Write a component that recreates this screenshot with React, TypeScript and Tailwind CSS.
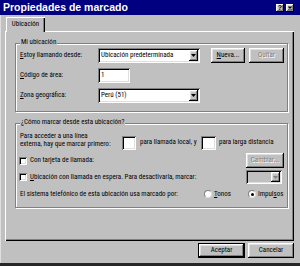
const raised =
  "shadow-[inset_-1px_-1px_#000,inset_1px_1px_#fff,inset_-2px_-2px_#808080,inset_2px_2px_#dfdfdf]";
const sunken =
  "shadow-[inset_1px_1px_#808080,inset_-1px_-1px_#fff,inset_2px_2px_#000,inset_-2px_-2px_#dfdfdf]";
const etched = "border border-[#808080] shadow-[inset_1px_1px_#fff,1px_1px_#fff]";
const disabledText = "text-[#808080] [text-shadow:1px_1px_0_#fff]";

function Arrow({ disabled }: { disabled?: boolean }) {
  return (
    <div className={`w-[9px] h-full flex items-center justify-center bg-[#c0c0c0] ${raised}`}>
      <svg width="5" height="3" viewBox="0 0 5 3">
        <polygon points="0,0 5,0 2.5,3" fill={disabled ? "#808080" : "#000"} />
      </svg>
    </div>
  );
}

function Combo({ text, width, disabled }: { text?: string; width: string; disabled?: boolean }) {
  return (
    <div className={`${width} h-full flex items-stretch p-[2px] ${disabled ? "bg-[#c0c0c0]" : "bg-white"} ${sunken}`}>
      <div className="flex-1 flex items-center pl-[1px] overflow-hidden whitespace-nowrap">{text}</div>
      <Arrow disabled={disabled} />
    </div>
  );
}

function Button({ children, width, disabled, isDefault }: { children: React.ReactNode; width: string; disabled?: boolean; isDefault?: boolean }) {
  return (
    <div className={`${width} h-full ${isDefault ? "border border-black" : ""} bg-[#c0c0c0]`}>
      <div className={`w-full h-full flex items-center justify-center ${raised} ${disabled ? disabledText : ""}`}>{children}</div>
    </div>
  );
}

function Check() {
  return <div className={`w-[8px] h-[8px] bg-white shrink-0 ${sunken}`} />;
}

function Radio({ checked }: { checked?: boolean }) {
  return (
    <div className="w-[8px] h-[8px] rounded-full bg-white shrink-0 border border-[#808080] border-r-[#dfdfdf] border-b-[#dfdfdf] flex items-center justify-center">
      {checked ? <div className="w-[3px] h-[3px] rounded-full bg-black" /> : null}
    </div>
  );
}

export default function App() {
  return (
    <div className="w-[300px] h-[266px] bg-[#c0c0c0] flex flex-col overflow-hidden text-black text-[7px] leading-none font-['Roboto_Condensed','Liberation_Sans',sans-serif]">
      {/* title bar */}
      <div className="h-[15px] bg-[#000080] flex items-center pl-[3px] pr-[6px] shrink-0">
        <span className="flex-1 text-white font-bold text-[10.5px] font-['Liberation_Sans',Arial,sans-serif]">
          Propiedades de marcado
        </span>
        <div className={`w-[8px] h-[8px] bg-[#c0c0c0] flex items-center justify-center ${raised}`}>
          <span className="text-[7px] font-bold leading-none font-['Liberation_Sans',sans-serif]">?</span>
        </div>
        <div className={`ml-[2px] w-[8px] h-[8px] bg-[#c0c0c0] flex items-center justify-center ${raised}`}>
          <svg width="4" height="4" viewBox="0 0 4 4">
            <path d="M0.5 0.5 L3.5 3.5 M3.5 0.5 L0.5 3.5" stroke="#000" strokeWidth="1.1" />
          </svg>
        </div>
      </div>

      {/* body */}
      <div className="flex-1 flex flex-col pl-[5px] pr-[6px] pt-[2px] shadow-[inset_1px_0_#dfdfdf]">
        {/* tabs */}
        <div className="flex h-[15px] -mb-[1px] relative z-10">
          <div className="ml-[1px] w-[39px] h-full bg-[#c0c0c0] shadow-[inset_1px_1px_#fff,inset_-1px_0_#000,inset_-2px_0_#808080] flex items-center justify-center">
            Ubicación
          </div>
        </div>

        {/* panel */}
        <div className="h-[210px] flex flex-col pl-[10px] pr-[6px] pt-[12px] shadow-[inset_1px_1px_#fff,inset_-1px_-1px_#000,inset_-2px_-2px_#808080]">
          {/* group 1 */}
          <div className={`relative h-[69px] ${etched} pl-[4px] pr-[3px] pt-[4px] flex flex-col gap-[5px]`}>
            <div className="absolute left-[4px] -top-[5px] px-[1px] bg-[#c0c0c0]">Mi ubicación</div>
            <div className="h-[15px] flex items-center">
              <span className="w-[78px]"><u>E</u>stoy llamando desde:</span>
              <Combo text="Ubicación predeterminada" width="w-[102px]" />
              <div className="ml-[11px] h-full">
                <Button width="w-[34px]"><u>N</u>ueva...</Button>
              </div>
              <div className="ml-[4px] h-full">
                <Button width="w-[35px]" disabled>Quitar</Button>
              </div>
            </div>
            <div className="h-[15px] flex items-center">
              <span className="w-[78px]"><u>C</u>ódigo de área:</span>
              <div className={`w-[32px] h-full bg-white flex items-center pl-[3px] ${sunken}`}>1</div>
            </div>
            <div className="h-[15px] flex items-center">
              <span className="w-[78px]"><u>Z</u>ona geográfica:</span>
              <Combo text="Perú (51)" width="w-[102px]" />
            </div>
          </div>

          {/* group 2 */}
          <div className={`relative mt-[11px] h-[85px] ${etched} pl-[4px] pr-[3px] pt-[9px] flex flex-col`}>
            <div className="absolute left-[4px] -top-[5px] px-[1px] bg-[#c0c0c0]">¿Cómo marcar desde esta ubicación?</div>
            <div className="h-[17px] flex items-start">
              <div className="w-[102px] leading-[7.5px]">
                Para acceder a una línea
                <br />
                externa, hay que marcar primero:
              </div>
              <div className={`mt-[3px] w-[14px] h-[14px] bg-white ${sunken}`} />
              <span className="mt-[6px] ml-[4px] w-[61px] whitespace-nowrap">para llamada local, y</span>
              <div className={`mt-[3px] w-[15px] h-[14px] bg-white ${sunken}`} />
              <span className="mt-[6px] ml-[3px] whitespace-nowrap">para larga distancia</span>
            </div>
            <div className="mt-[3px] h-[15px] flex items-center">
              <div className="-ml-[1px]"><Check /></div>
              <span className="ml-[3px] flex-1">Con tarjeta de llamada:</span>
              <div className="h-full">
                <Button width="w-[38px]" disabled>Cambiar...</Button>
              </div>
            </div>
            <div className="mt-[2px] h-[14px] flex items-center">
              <div className="-ml-[1px]"><Check /></div>
              <span className="ml-[3px] flex-1"><u>U</u>bicación con llamada en espera. Para desactivarla, marcar:</span>
              <div className="h-full mr-[2px]">
                <Combo width="w-[36px]" disabled />
              </div>
            </div>
            <div className="mt-[4px] h-[12px] flex items-center">
              <span className="w-[184px]">El sistema telefónico de esta ubicación usa marcado por:</span>
              <Radio />
              <span className="ml-[2px] w-[34px]"><u>T</u>onos</span>
              <Radio checked />
              <span className="ml-[2px]">Impul<u>s</u>os</span>
            </div>
          </div>
        </div>

        {/* buttons */}
        <div className="mt-[2px] h-[15px] flex justify-end gap-[3px]">
          <Button width="w-[47px]" isDefault>Aceptar</Button>
          <Button width="w-[46px]">Cancelar</Button>
        </div>
      </div>
      <div className="h-[3px] bg-[#262626] shrink-0" />
    </div>
  );
}
